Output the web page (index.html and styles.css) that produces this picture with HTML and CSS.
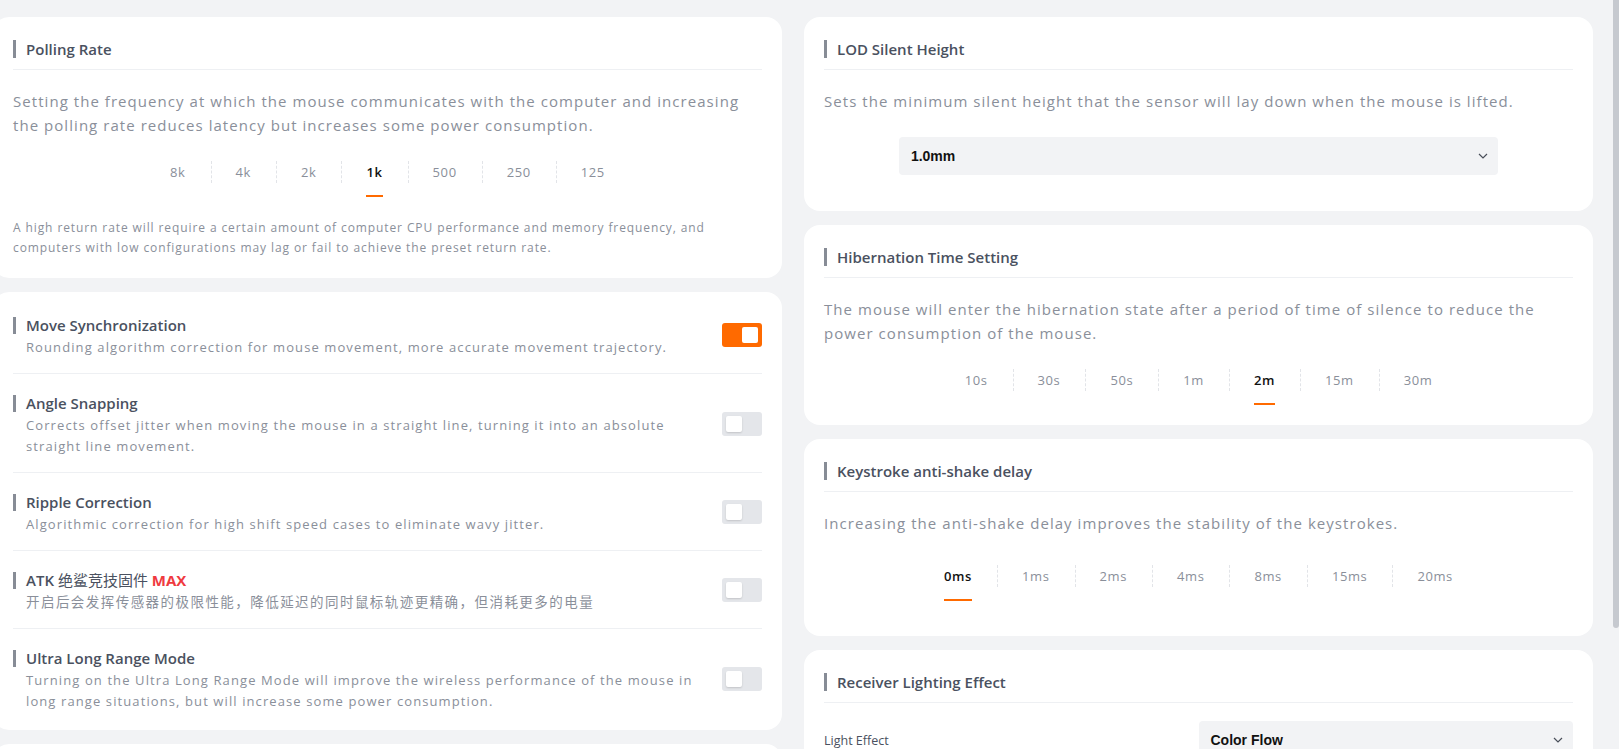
FILE: index.html
```html
<!DOCTYPE html>
<html lang="en">
<head>
  <meta charset="UTF-8" />
  <meta name="viewport" content="width=device-width, initial-scale=1.0"/>
  <title>Mouse Settings</title>
  <link rel="stylesheet" href="styles.css">
</head>
<body>
  <div class="page">
    <div class="columns">

      <!-- left column -->
      <div class="column">
        <section class="card">
          <div class="card-title">Polling Rate</div>
          <p class="card-desc">Setting the frequency at which the mouse communicates with the computer and increasing the polling rate reduces latency but increases some power consumption.</p>
          <div class="tabs">
            <span class="tab">8k</span>
            <span class="tab">4k</span>
            <span class="tab">2k</span>
            <span class="tab active">1k</span>
            <span class="tab">500</span>
            <span class="tab">250</span>
            <span class="tab">125</span>
          </div>
          <p class="card-note">A high return rate will require a certain amount of computer CPU performance and memory frequency, and computers with low configurations may lag or fail to achieve the preset return rate.</p>
        </section>

        <section class="card card-list">
          <div class="switch-row">
            <div class="switch-text">
              <div class="switch-title"><span>Move Synchronization</span></div>
              <div class="switch-desc">Rounding algorithm correction for mouse movement, more accurate movement trajectory.</div>
            </div>
            <span class="switch on"></span>
          </div>
          <div class="switch-row">
            <div class="switch-text">
              <div class="switch-title"><span>Angle Snapping</span></div>
              <div class="switch-desc">Corrects offset jitter when moving the mouse in a straight line, turning it into an absolute straight line movement.</div>
            </div>
            <span class="switch"></span>
          </div>
          <div class="switch-row">
            <div class="switch-text">
              <div class="switch-title"><span>Ripple Correction</span></div>
              <div class="switch-desc">Algorithmic correction for high shift speed cases to eliminate wavy jitter.</div>
            </div>
            <span class="switch"></span>
          </div>
          <div class="switch-row">
            <div class="switch-text">
              <div class="switch-title"><span>ATK <span class="cjk-title">绝鲨竞技固件</span> <b class="max">MAX</b></span></div>
              <div class="switch-desc cjk">开启后会发挥传感器的极限性能，降低延迟的同时鼠标轨迹更精确，但消耗更多的电量</div>
            </div>
            <span class="switch"></span>
          </div>
          <div class="switch-row">
            <div class="switch-text">
              <div class="switch-title"><span>Ultra Long Range Mode</span></div>
              <div class="switch-desc">Turning on the Ultra Long Range Mode will improve the wireless performance of the mouse in long range situations, but will increase some power consumption.</div>
            </div>
            <span class="switch"></span>
          </div>
        </section>

        <section class="card card-list">
          <div class="switch-row">
            <div class="switch-text">
              <div class="switch-title"><span>Glass Mode</span></div>
              <div class="switch-desc">Optimizes the sensor for tracking on glass surfaces.</div>
            </div>
            <span class="switch"></span>
          </div>
        </section>
      </div>

      <!-- right column -->
      <div class="column">
        <section class="card">
          <div class="card-title">LOD Silent Height</div>
          <p class="card-desc">Sets the minimum silent height that the sensor will lay down when the mouse is lifted.</p>
          <div class="select select-center">
            <span>1.0mm</span>
            <svg class="chevron" width="10" height="6" viewBox="0 0 10 6"><polyline points="1,1 5,5 9,1" fill="none" stroke="#4a4f5a" stroke-width="1.2"/></svg>
          </div>
        </section>

        <section class="card">
          <div class="card-title">Hibernation Time Setting</div>
          <p class="card-desc">The mouse will enter the hibernation state after a period of time of silence to reduce the power consumption of the mouse.</p>
          <div class="tabs">
            <span class="tab">10s</span>
            <span class="tab">30s</span>
            <span class="tab">50s</span>
            <span class="tab">1m</span>
            <span class="tab active">2m</span>
            <span class="tab">15m</span>
            <span class="tab">30m</span>
          </div>
        </section>

        <section class="card">
          <div class="card-title">Keystroke anti-shake delay</div>
          <p class="card-desc">Increasing the anti-shake delay improves the stability of the keystrokes.</p>
          <div class="tabs tabs-loose">
            <span class="tab active">0ms</span>
            <span class="tab">1ms</span>
            <span class="tab">2ms</span>
            <span class="tab">4ms</span>
            <span class="tab">8ms</span>
            <span class="tab">15ms</span>
            <span class="tab">20ms</span>
          </div>
        </section>

        <section class="card">
          <div class="card-title">Receiver Lighting Effect</div>
          <div class="form-row">
            <span class="form-label">Light Effect</span>
            <div class="select select-half">
              <span>Color Flow</span>
              <svg class="chevron" width="10" height="6" viewBox="0 0 10 6"><polyline points="1,1 5,5 9,1" fill="none" stroke="#4a4f5a" stroke-width="1.2"/></svg>
            </div>
          </div>
          <div class="form-row">
            <span class="form-label">Light Speed</span>
            <div class="select select-half">
              <span>Medium</span>
              <svg class="chevron" width="10" height="6" viewBox="0 0 10 6"><polyline points="1,1 5,5 9,1" fill="none" stroke="#4a4f5a" stroke-width="1.2"/></svg>
            </div>
          </div>
          <div class="form-row">
            <span class="form-label">Brightness</span>
            <div class="select select-half">
              <span>100%</span>
              <svg class="chevron" width="10" height="6" viewBox="0 0 10 6"><polyline points="1,1 5,5 9,1" fill="none" stroke="#4a4f5a" stroke-width="1.2"/></svg>
            </div>
          </div>
        </section>
      </div>

    </div>
  </div>

  <!-- slim page scrollbar -->
  <div class="scrollbar"><div class="scrollbar-thumb"></div></div>
</body>
</html>
```

FILE: styles.css
```css
:root {
  --bg: #f2f3f5;
  --card: #ffffff;
  --title: #4a5160;
  --muted: #8a8f9a;
  --line: #eef0f3;
  --accent: #ff6a00;
}

* {
  box-sizing: border-box;
}

body {
  margin: 0;
  height: 100vh;
  display: flex;
  background: var(--bg);
  font-family: "Open Sans", "Noto Sans CJK SC", sans-serif;
  color: var(--title);
  overflow: hidden;
}

.page {
  flex: 1;
  min-width: 0;
  overflow: hidden;
}

.scrollbar {
  width: 6px;
  flex-shrink: 0;
}

.scrollbar-thumb {
  height: 628px;
  background: #c6c9cf;
  border-radius: 0 0 3px 3px;
}

.columns {
  display: grid;
  grid-template-columns: repeat(2, minmax(0, 1fr));
  column-gap: 22px;
  margin-left: -7px;
  padding: 17px 20px 20px 0;
  align-items: start;
}

.column {
  display: flex;
  flex-direction: column;
  gap: 14px;
}

.card {
  background: var(--card);
  border-radius: 16px;
  padding: 20px;
}

/* section header with the grey marker bar */
.card-title {
  display: flex;
  align-items: center;
  gap: 10px;
  font-size: 15px;
  font-weight: 600;
  line-height: 24px;
  padding-bottom: 8px;
  border-bottom: 1px solid var(--line);
}

.card-title::before,
.switch-title::before {
  content: "";
  width: 3px;
  height: 18px;
  background: #878c96;
  flex-shrink: 0;
}

.card-desc {
  margin: 19px 0 0;
  font-size: 15px;
  line-height: 24px;
  letter-spacing: 1.05px;
  color: var(--muted);
}

.card-note {
  margin: 21px 0 0;
  font-size: 12px;
  line-height: 20px;
  letter-spacing: 0.9px;
  color: var(--muted);
}

/* segmented value picker */
.tabs {
  display: flex;
  justify-content: center;
  margin-top: 24px;
}

.tabs-loose {
  margin: 30px 0 15px;
}

.tab {
  position: relative;
  padding: 0 25px 14px;
  font-size: 13px;
  line-height: 22px;
  letter-spacing: 0.6px;
  color: var(--muted);
}

.tab + .tab::before {
  content: "";
  position: absolute;
  left: 0;
  top: 0;
  height: 22px;
  border-left: 1px dashed #e2e4e8;
}

.tab.active {
  color: #111;
  font-weight: 600;
}

.tab.active::after {
  content: "";
  position: absolute;
  left: 25px;
  right: 25px;
  bottom: 0;
  height: 2px;
  background: var(--accent);
}

/* switch list */
.card-list {
  padding: 4px 20px 3px;
}

.switch-row {
  display: flex;
  align-items: center;
  gap: 22px;
  padding: 19px 0 15px;
  border-bottom: 1px solid var(--line);
}

.switch-row:last-child {
  border-bottom: none;
}

.switch-text {
  flex: 1;
}

.switch-title {
  display: flex;
  align-items: center;
  gap: 10px;
  font-size: 15px;
  font-weight: 600;
  line-height: 20px;
}

.switch-title::before {
  height: 17px;
}

.cjk-title {
  font-weight: 400;
}

.max {
  color: #ef3a3f;
  font-weight: 700;
}

.switch-desc {
  margin-top: 2px;
  padding-left: 13px;
  font-size: 13px;
  line-height: 21px;
  letter-spacing: 1.1px;
  color: var(--muted);
}

.switch-desc.cjk {
  font-size: 13.5px;
  letter-spacing: 1.45px;
}

.switch {
  position: relative;
  width: 40px;
  height: 24px;
  margin-bottom: 3px;
  border-radius: 3px;
  background: #e4e6ea;
  flex-shrink: 0;
}

.switch::after {
  content: "";
  position: absolute;
  top: 4px;
  left: 4px;
  width: 16px;
  height: 16px;
  border-radius: 2px;
  background: #fff;
  box-shadow: 0 1px 2px rgba(0, 0, 0, 0.15);
}

.switch.on {
  background: var(--accent);
}

.switch.on::after {
  left: auto;
  right: 4px;
  box-shadow: none;
}

/* dropdowns */
.select {
  display: flex;
  align-items: center;
  justify-content: space-between;
  height: 38px;
  padding: 0 10px 0 12px;
  background: #f2f3f5;
  border-radius: 4px;
  font-family: "Liberation Sans", Arial, sans-serif;
  font-size: 14px;
  font-weight: 700;
  color: #111;
}

.select-center {
  width: 80%;
  margin: 24px auto 16px;
}

.select-half {
  width: 50%;
}

.form-row {
  display: flex;
  align-items: center;
  justify-content: space-between;
  margin-top: 18px;
}

.form-row + .form-row {
  margin-top: 16px;
}

.form-label {
  font-size: 12.5px;
  color: var(--title);
}
```
